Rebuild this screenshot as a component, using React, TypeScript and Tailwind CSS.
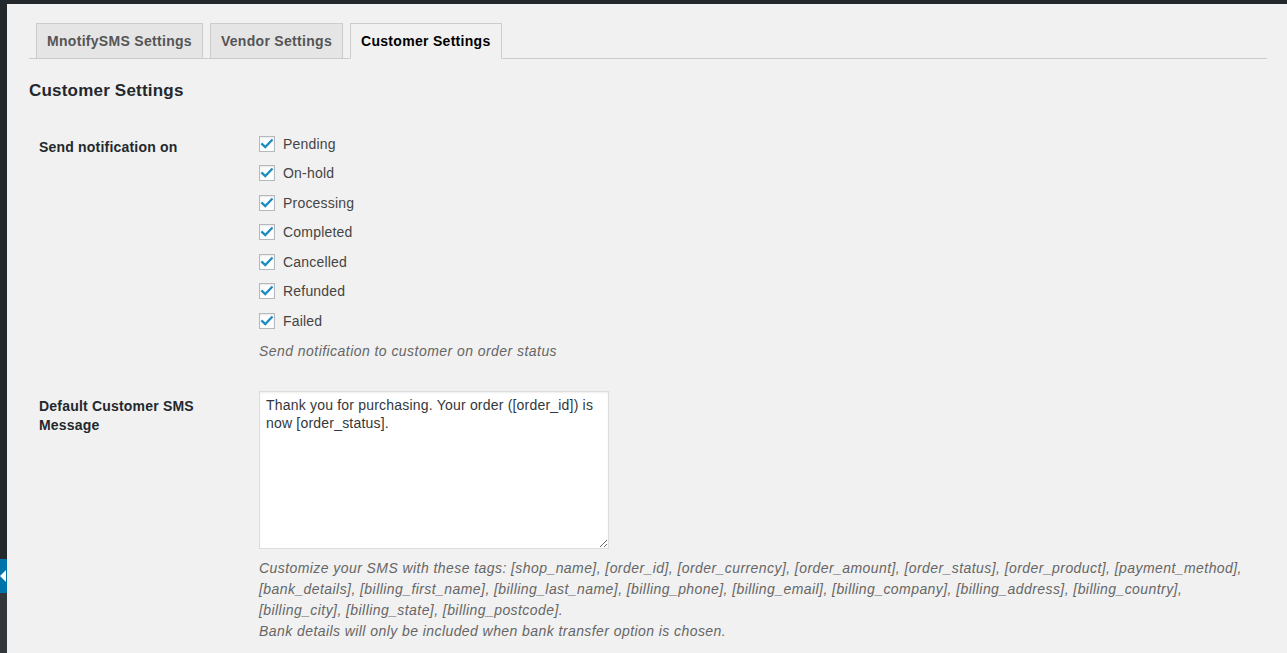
const statuses = ["Pending", "On-hold", "Processing", "Completed", "Cancelled", "Refunded", "Failed"];

const tabs = [
  { name: "MnotifySMS Settings", active: false },
  { name: "Vendor Settings", active: false },
  { name: "Customer Settings", active: true },
];

function CheckBox() {
  return (
    <span className="flex h-4 w-4 shrink-0 items-center justify-center border border-[#b4b9be] bg-white shadow-[inset_0_1px_2px_rgba(0,0,0,0.1)]">
      <svg viewBox="0 0 16 16" className="h-[14px] w-[14px]">
        <path d="M2.5 8.2 L6 11.6 L13.4 3.8" fill="none" stroke="#1e8cbe" strokeWidth="2.6" strokeLinecap="square" />
      </svg>
    </span>
  );
}

export default function App() {
  return (
    <div
      className="flex h-[653px] w-[1287px] overflow-hidden bg-[#f1f1f1] text-[#444]"
      style={{ fontFamily: '"Liberation Sans", Arial, sans-serif' }}
    >
      {/* admin menu edge */}
      <div className="flex w-[7px] shrink-0 flex-col bg-[#23282d]">
        <div className="h-[559px]"></div>
        <div className="relative h-[34px] bg-[#0073aa]">
          <span className="absolute left-0 top-[11px] h-0 w-0 border-y-[6px] border-r-[6px] border-y-transparent border-r-white"></span>
        </div>
        <div className="flex-1 bg-[#32373c]"></div>
      </div>

      <div className="flex flex-1 flex-col">
        <div className="h-1 bg-[#23282d]"></div>
        <div className="ml-[22px] mr-5 flex flex-col">
          {/* tabs */}
          <div className="mt-[19px] flex border-b border-[#ccc]">
            {tabs.map((t) => (
              <div
                key={t.name}
                className={
                  t.active
                    ? "-mb-px ml-[7px] border border-b-[#f1f1f1] border-[#ccc] bg-[#f1f1f1] px-[10px] py-[5px] text-[14px] font-bold leading-6 tracking-[0.3px] text-black"
                    : "ml-[7px] border border-b-0 border-[#ccc] bg-[#e5e5e5] px-[10px] py-[5px] text-[14px] font-bold leading-6 tracking-[0.3px] text-[#555]"
                }
              >
                {t.name}
              </div>
            ))}
          </div>

          <h2 className="mt-[21px] text-[17px] font-bold leading-[22px] tracking-[0.2px] text-[#23282d]">Customer Settings</h2>

          {/* row 1 */}
          <div className="mt-[27px] flex">
            <div className="w-[230px] shrink-0 pl-[10px] pt-[8px] text-[14px] font-bold leading-5 tracking-[0.2px] text-[#23282d]">
              Send notification on
            </div>
            <div className="flex flex-col">
              {statuses.map((s) => (
                <label key={s} className="flex h-[29.5px] items-center gap-2 text-[14px] leading-5 tracking-[0.2px] text-[#444]">
                  <CheckBox />
                  <span>{s}</span>
                </label>
              ))}
              <p className="mt-[5px] text-[14px] italic leading-5 tracking-[0.45px] text-[#666]">Send notification to customer on order status</p>
            </div>
          </div>

          {/* row 2 */}
          <div className="mt-[30px] flex">
            <div className="w-[230px] shrink-0 pl-[10px] pt-[6px] text-[14px] font-bold leading-[19px] tracking-[0.2px] text-[#23282d]">
              Default Customer SMS
              <br />
              Message
            </div>
            <div className="flex flex-col">
              <textarea
                className="h-[158px] w-[350px] resize border border-[#ddd] bg-white px-[6px] py-[4px] text-[14px] leading-[18.5px] tracking-[0.2px] text-[#32373c] shadow-[inset_0_1px_2px_rgba(0,0,0,0.07)] outline-none"
                defaultValue="Thank you for purchasing. Your order ([order_id]) is now [order_status]."
              ></textarea>
              <p className="mt-[9px] w-[1005px] text-[14px] italic leading-[21px] tracking-[0.43px] text-[#666]">
                Customize your SMS with these tags: [shop_name], [order_id], [order_currency], [order_amount], [order_status], [order_product], [payment_method],
                <br />
                [bank_details], [billing_first_name], [billing_last_name], [billing_phone], [billing_email], [billing_company], [billing_address], [billing_country],
                <br />
                [billing_city], [billing_state], [billing_postcode].
                <br />
                Bank details will only be included when bank transfer option is chosen.
              </p>
            </div>
          </div>
        </div>
      </div>
    </div>
  );
}
